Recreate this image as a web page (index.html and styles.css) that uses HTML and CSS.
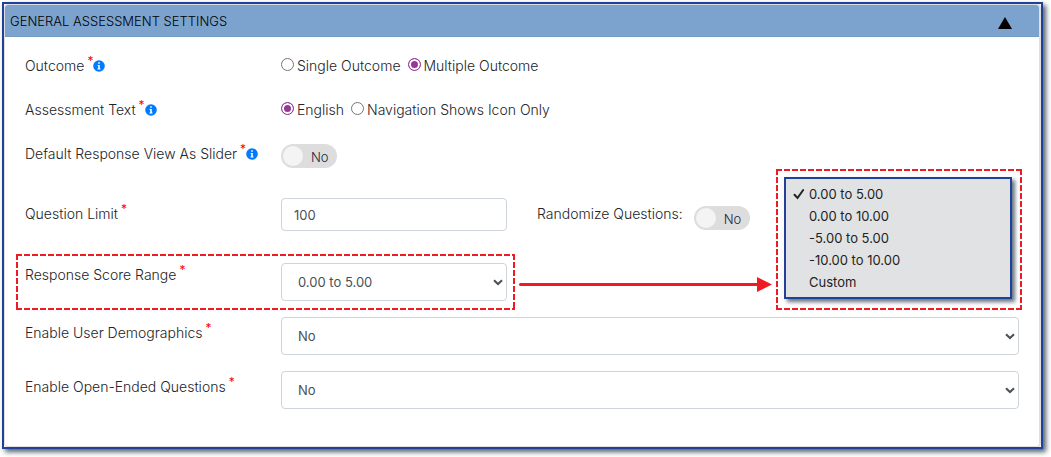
FILE: index.html
```html
<!DOCTYPE html>
<html lang="en">
<head>
<meta charset="utf-8">
<meta name="viewport" content="width=device-width, initial-scale=1">
<title>General Assessment Settings</title>
<link rel="stylesheet" href="styles.css">
</head>
<body>
<main class="frame">
  <form class="panel">
    <header class="panel-header">
      <h1 class="panel-title">GENERAL ASSESSMENT SETTINGS</h1>
      <button type="button" class="collapse" aria-label="Collapse section"><svg width="14" height="12" viewBox="0 0 14 12"><path d="M7 0 14 12H0Z"/></svg></button>
    </header>
    <div class="fields">
      <div class="row" role="radiogroup" aria-labelledby="outcome">
        <div class="label" id="outcome">Outcome <span class="req">*</span><svg class="info" viewBox="0 0 12 12"><circle cx="6" cy="6" r="5.8"/><path d="M5.2 2.2h1.6v1.5H5.2zM4.6 4.9h2.2v3.6h.7v1H4.5v-1h.7V5.9h-.6z"/></svg></div>
        <div class="options">
          <label class="option"><input type="radio" name="outcome">Single Outcome</label>
          <label class="option"><input type="radio" name="outcome" checked>Multiple Outcome</label>
        </div>
      </div>
      <div class="row" role="radiogroup" aria-labelledby="text">
        <div class="label" id="text">Assessment Text <span class="req">*</span><svg class="info" viewBox="0 0 12 12"><circle cx="6" cy="6" r="5.8"/><path d="M5.2 2.2h1.6v1.5H5.2zM4.6 4.9h2.2v3.6h.7v1H4.5v-1h.7V5.9h-.6z"/></svg></div>
        <div class="options">
          <label class="option"><input type="radio" name="text" checked>English</label>
          <label class="option"><input type="radio" name="text">Navigation Shows Icon Only</label>
        </div>
      </div>
      <div class="row">
        <label class="label" for="slider">Default Response View As Slider <span class="req">*</span><svg class="info" viewBox="0 0 12 12"><circle cx="6" cy="6" r="5.8"/><path d="M5.2 2.2h1.6v1.5H5.2zM4.6 4.9h2.2v3.6h.7v1H4.5v-1h.7V5.9h-.6z"/></svg></label>
        <label class="toggle"><input type="checkbox" id="slider"><span class="toggle-text">No</span></label>
      </div>
      <div class="row row-limit">
        <label class="label label-mid" for="limit">Question Limit <span class="req">*</span></label>
        <input class="control text-input" id="limit" type="text" value="100">
        <div class="randomize">
          <label class="randomize-label" for="random">Randomize Questions:</label>
          <label class="toggle"><input type="checkbox" id="random"><span class="toggle-text">No</span></label>
        </div>
      </div>
      <div class="row row-range">
        <div class="highlight"></div>
        <label class="label label-high" for="range">Response Score Range <span class="req">*</span></label>
        <div class="select-wrap">
          <select class="control select" id="range"><option>0.00 to 5.00</option><option>0.00 to 10.00</option><option>-5.00 to 5.00</option><option>-10.00 to 10.00</option><option>Custom</option></select>
          <svg class="chevron" viewBox="0 0 10 7"><path d="M1 1.2 5 5 9 1.2"/></svg>
        </div>
        <div class="arrow"><span class="arrow-line"></span><svg width="15" height="15" viewBox="0 0 15 15"><path d="M0 0 15 7.5 0 15Z"/></svg></div>
        <div class="callout">
          <ul class="menu">
            <li class="menu-item"><svg class="check" viewBox="0 0 12 12"><path d="M1.5 6.8 4.5 10 10.2 2"/></svg>0.00 to 5.00</li>
            <li class="menu-item">0.00 to 10.00</li>
            <li class="menu-item">-5.00 to 5.00</li>
            <li class="menu-item">-10.00 to 10.00</li>
            <li class="menu-item">Custom</li>
          </ul>
        </div>
      </div>
      <div class="row row-wide">
        <label class="label label-mid" for="demo">Enable User Demographics <span class="req">*</span></label>
        <div class="select-wrap">
          <select class="control select" id="demo"><option>No</option><option>Yes</option></select>
          <svg class="chevron" viewBox="0 0 10 7"><path d="M1 1.2 5 5 9 1.2"/></svg>
        </div>
      </div>
      <div class="row row-wide">
        <label class="label label-mid" for="open">Enable Open-Ended Questions <span class="req">*</span></label>
        <div class="select-wrap">
          <select class="control select" id="open"><option>No</option><option>Yes</option></select>
          <svg class="chevron" viewBox="0 0 10 7"><path d="M1 1.2 5 5 9 1.2"/></svg>
        </div>
      </div>
    </div>
  </form>
</main>
</body>
</html>
```
FILE: styles.css
```css
* { box-sizing: border-box; }
body {
  margin: 0;
  padding: 2px 8px 8px 2px;
  background: #fff;
  color: #212529;
  font: 300 14px/20px Inter, "Liberation Sans", sans-serif;
}
.frame {
  border: 2px solid #20409a;
  box-shadow: 3px 3px 5px #52616b;
  background: #fff;
}
.panel {
  border: 1px solid #dfdfdf;
  border-right-width: 2px;
  border-radius: 4px;
}
.panel-header {
  display: flex;
  align-items: center;
  justify-content: space-between;
  height: 32px;
  padding: 0 27px 0 5px;
  background: #7ba3ce;
  border-bottom: 1px solid #739bc5;
  border-radius: 3px 3px 0 0;
}
.panel-title { margin: 0; font-size: 13px; font-weight: 300; color: #000; }
.collapse { display: flex; padding: 4px 0 0; border: 0; background: none; }
.fields { padding: 19px 20px 37px 20px; }
.row {
  display: grid;
  grid-template-columns: 256px 226px 1fr;
  align-items: start;
  margin-bottom: 24px;
}
.row-limit { margin: 30px 0 32px; }
.row-range { position: relative; margin-bottom: 16px; }
.row-wide { grid-template-columns: 256px 1fr; margin-bottom: 16px; }
.row-wide:last-child { margin-bottom: 0; }
.label { display: flex; white-space: nowrap; }
.label-mid { padding-top: 6px; }
.label-high { padding-top: 2px; }
.req { margin-left: 3px; line-height: 10px; color: #f00; font-size: 12px; font-weight: 400; }
.info { width: 12px; height: 12px; margin-top: 4px; fill: #007bff; }
.info path { fill: #fff; }
.options { display: flex; grid-column: 2 / 4; gap: 7px; }
.option { display: flex; gap: 3px; white-space: nowrap; }
.option input {
  appearance: none;
  width: 13px;
  height: 13px;
  margin: 2px 0 0;
  border: 1px solid #767676;
  border-radius: 50%;
  background: #fff;
}
.option input:checked {
  border-color: #963996;
  background: #963996;
  box-shadow: inset 0 0 0 2px #fff;
}
.toggle {
  display: flex;
  align-items: center;
  width: 56px;
  height: 24px;
  padding: 0 2px;
  border-radius: 12px;
  background: #ddd;
}
.toggle input {
  appearance: none;
  width: 20px;
  height: 20px;
  margin: 0 8px 0 0;
  border-radius: 50%;
  background: #f4f4f4;
}
.toggle-text { padding-top: 2px; font-size: 13px; color: #1b2440; }
.control {
  width: 100%;
  border: 1px solid #ced4da;
  border-radius: 4px;
  background: #fff;
  color: #495057;
  font: 400 13px/20px Inter, "Liberation Sans", sans-serif;
}
.text-input { height: 33px; padding: 0 12px; }
.randomize { display: flex; gap: 11px; padding: 8px 0 0 30px; white-space: nowrap; }
.randomize-label { margin-top: -2px; }
.select-wrap { display: grid; align-items: center; }
.select-wrap > * { grid-area: 1 / 1; }
.select { appearance: none; height: 38px; padding: 0 30px 0 16px; }
.chevron {
  justify-self: end;
  width: 10px;
  height: 7px;
  margin-right: 4px;
  fill: none;
  stroke: #495057;
  stroke-width: 2;
  pointer-events: none;
}
/* Dashed outlines share one repeating 6px-on, 2px-off pattern */
.highlight, .callout {
  position: absolute;
  background:
    repeating-linear-gradient(90deg, #ed1c24 0 6px, transparent 6px 8px) top / 100% 2px no-repeat,
    repeating-linear-gradient(90deg, #ed1c24 0 6px, transparent 6px 8px) bottom / 100% 2px no-repeat,
    repeating-linear-gradient(#ed1c24 0 6px, transparent 6px 8px) left / 2px 100% no-repeat,
    repeating-linear-gradient(#ed1c24 0 6px, transparent 6px 8px) right / 2px 100% no-repeat;
}
.highlight { top: -9px; bottom: -9px; left: -9px; width: 499px; pointer-events: none; }
.arrow { display: flex; align-items: center; height: 42px; margin: 0 247px -4px 12px; }
.arrow-line { flex: 1; height: 3px; background: #ed1c24; border-radius: 2px 0 0 2px; }
.arrow svg { fill: #ed1c24; }
.callout { right: -3px; bottom: -9px; width: 246px; padding: 8px 10px 11px 8px; }
.menu {
  margin: 0;
  padding: 4px 0;
  border: 2px solid #20409a;
  background: #e1e2e4;
  box-shadow: 3px 3px 4px #65747e;
  color: #222;
  font-size: 13px;
  font-weight: 400;
  line-height: 22px;
  list-style: none;
}
.menu-item { position: relative; padding-left: 23px; }
.check {
  position: absolute;
  left: 7px;
  top: 5px;
  width: 12px;
  height: 12px;
  fill: none;
  stroke: #222;
  stroke-width: 2;
  stroke-linecap: round;
}
```
